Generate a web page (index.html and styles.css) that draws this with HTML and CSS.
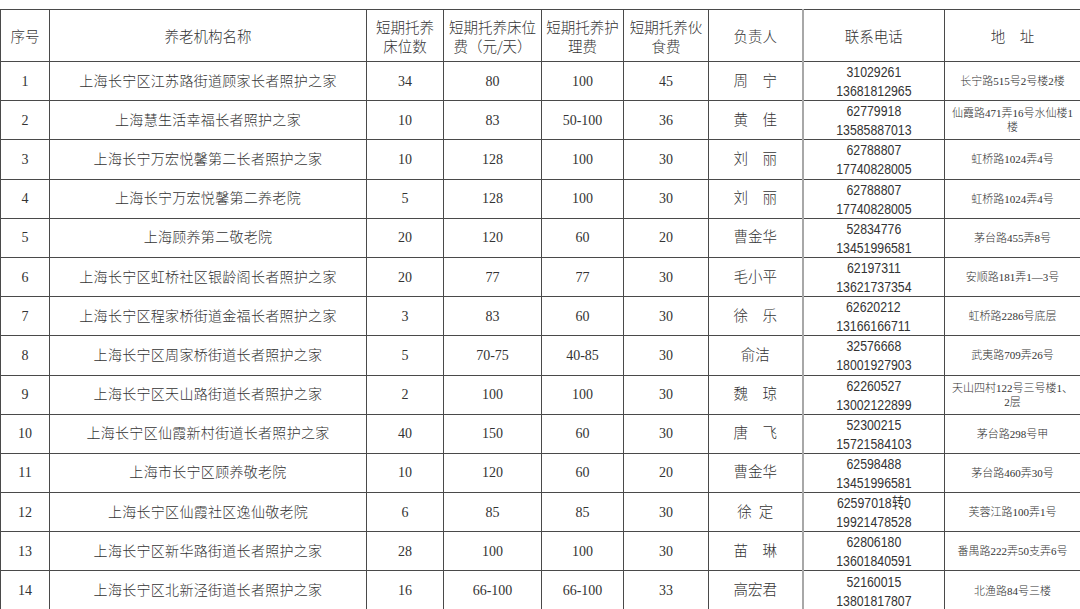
FILE: index.html
```html
<!DOCTYPE html>
<html lang="zh-CN">
<head>
<meta charset="utf-8">
<title>短期托养</title>
<link rel="stylesheet" href="styles.css">
</head>
<body>
<table class="grid">
  <colgroup>
    <col class="c-no"><col class="c-name"><col class="c-bed"><col class="c-fee"><col class="c-care"><col class="c-food"><col class="c-man"><col class="c-tel"><col class="c-addr">
  </colgroup>
  <thead>
    <tr class="hd">
      <th>序号</th>
      <th>养老机构名称</th>
      <th>短期托养<br>床位数</th>
      <th>短期托养床位<br>费（元/天）</th>
      <th>短期托养护<br>理费</th>
      <th>短期托养伙<br>食费</th>
      <th class="man">负责人</th>
      <th>联系电话</th>
      <th>地　址</th>
    </tr>
  </thead>
  <tbody>
    <tr><td class="num">1</td><td class="name">上海长宁区江苏路街道顾家长者照护之家</td><td class="num">34</td><td class="num">80</td><td class="num">100</td><td class="num">45</td><td class="man">周　宁</td><td class="tel"><span class="ph">31029261<br>13681812965</span></td><td class="addr">长宁路515号2号楼2楼</td></tr>
    <tr><td class="num">2</td><td class="name">上海慧生活幸福长者照护之家</td><td class="num">10</td><td class="num">83</td><td class="num">50-100</td><td class="num">36</td><td class="man">黄　佳</td><td class="tel"><span class="ph">62779918<br>13585887013</span></td><td class="addr">仙霞路471弄16号水仙楼1楼</td></tr>
    <tr><td class="num">3</td><td class="name">上海长宁万宏悦馨第二长者照护之家</td><td class="num">10</td><td class="num">128</td><td class="num">100</td><td class="num">30</td><td class="man">刘　丽</td><td class="tel"><span class="ph">62788807<br>17740828005</span></td><td class="addr">虹桥路1024弄4号</td></tr>
    <tr><td class="num">4</td><td class="name">上海长宁万宏悦馨第二养老院</td><td class="num">5</td><td class="num">128</td><td class="num">100</td><td class="num">30</td><td class="man">刘　丽</td><td class="tel"><span class="ph">62788807<br>17740828005</span></td><td class="addr">虹桥路1024弄4号</td></tr>
    <tr><td class="num">5</td><td class="name">上海顾养第二敬老院</td><td class="num">20</td><td class="num">120</td><td class="num">60</td><td class="num">20</td><td class="man">曹金华</td><td class="tel"><span class="ph">52834776<br>13451996581</span></td><td class="addr">茅台路455弄8号</td></tr>
    <tr><td class="num">6</td><td class="name">上海长宁区虹桥社区银龄阁长者照护之家</td><td class="num">20</td><td class="num">77</td><td class="num">77</td><td class="num">30</td><td class="man">毛小平</td><td class="tel"><span class="ph">62197311<br>13621737354</span></td><td class="addr">安顺路181弄1—3号</td></tr>
    <tr><td class="num">7</td><td class="name">上海长宁区程家桥街道金福长者照护之家</td><td class="num">3</td><td class="num">83</td><td class="num">60</td><td class="num">30</td><td class="man">徐　乐</td><td class="tel"><span class="ph">62620212<br>13166166711</span></td><td class="addr">虹桥路2286号底层</td></tr>
    <tr><td class="num">8</td><td class="name">上海长宁区周家桥街道长者照护之家</td><td class="num">5</td><td class="num">70-75</td><td class="num">40-85</td><td class="num">30</td><td class="man">俞洁</td><td class="tel"><span class="ph">32576668<br>18001927903</span></td><td class="addr">武夷路709弄26号</td></tr>
    <tr><td class="num">9</td><td class="name">上海长宁区天山路街道长者照护之家</td><td class="num">2</td><td class="num">100</td><td class="num">100</td><td class="num">30</td><td class="man">魏　琼</td><td class="tel"><span class="ph">62260527<br>13002122899</span></td><td class="addr">天山四村122号三号楼1、2层</td></tr>
    <tr><td class="num">10</td><td class="name">上海长宁区仙霞新村街道长者照护之家</td><td class="num">40</td><td class="num">150</td><td class="num">60</td><td class="num">30</td><td class="man">唐　飞</td><td class="tel"><span class="ph">52300215<br>15721584103</span></td><td class="addr">茅台路298号甲</td></tr>
    <tr><td class="num">11</td><td class="name">上海市长宁区顾养敬老院</td><td class="num">10</td><td class="num">120</td><td class="num">60</td><td class="num">20</td><td class="man">曹金华</td><td class="tel"><span class="ph">62598488<br>13451996581</span></td><td class="addr">茅台路460弄30号</td></tr>
    <tr><td class="num">12</td><td class="name">上海长宁区仙霞社区逸仙敬老院</td><td class="num">6</td><td class="num">85</td><td class="num">85</td><td class="num">30</td><td class="man">徐&ensp;定</td><td class="tel"><span class="ph">62597018转0<br>19921478528</span></td><td class="addr">芙蓉江路100弄1号</td></tr>
    <tr><td class="num">13</td><td class="name">上海长宁区新华路街道长者照护之家</td><td class="num">28</td><td class="num">100</td><td class="num">100</td><td class="num">30</td><td class="man">苗　琳</td><td class="tel"><span class="ph">62806180<br>13601840591</span></td><td class="addr">番禺路222弄50支弄6号</td></tr>
    <tr><td class="num">14</td><td class="name">上海长宁区北新泾街道长者照护之家</td><td class="num">16</td><td class="num">66-100</td><td class="num">66-100</td><td class="num">33</td><td class="man">高宏君</td><td class="tel"><span class="ph">52160015<br>13801817807</span></td><td class="addr">北渔路84号三楼</td></tr>
  </tbody>
</table>
</body>
</html>
```
FILE: styles.css
```css
html, body {
  margin: 0;
  padding: 0;
  background: #ffffff;
}
body {
  padding-top: 9px;
  font-family: "Liberation Serif", "Noto Sans CJK SC", serif;
  color: #333333;
}
.grid {
  width: 1080px;
  table-layout: fixed;
  border-collapse: collapse;
  font-size: 14.5px;
}
.c-no { width: 49px; }
.c-name { width: 317px; }
.c-bed { width: 77px; }
.c-fee { width: 98px; }
.c-care { width: 82px; }
.c-food { width: 85px; }
.c-man { width: 94px; }
.c-tel { width: 142px; }
.c-addr { width: 136px; }

.grid th, .grid td {
  border: 1px solid #4a4a4a;
  text-align: center;
  vertical-align: middle;
  padding: 0 2px;
  line-height: 19px;
  white-space: nowrap;
}
.grid th {
  font-family: "Noto Sans CJK SC", sans-serif;
  font-weight: 300;
}
.grid td {
  font-family: "Liberation Serif", "Noto Sans CJK SC", serif;
  font-weight: 300;
}
.hd { height: 52px; }
.grid tbody tr { height: 39.2px; }
.grid .name {
  font-size: 14px;
  letter-spacing: 0.3px;
}
.grid .num { font-size: 14px; }
.grid .man { border-right: 2px solid #a8a8a8; }
.grid .tel {
  font-family: "Liberation Sans", sans-serif;
  font-size: 15px;
  line-height: 19px;
}
.ph {
  display: inline-block;
  transform: scaleX(0.82);
}
.grid .addr {
  font-size: 11px;
  line-height: 14px;
  padding: 0 6px;
  white-space: normal;
}
```
